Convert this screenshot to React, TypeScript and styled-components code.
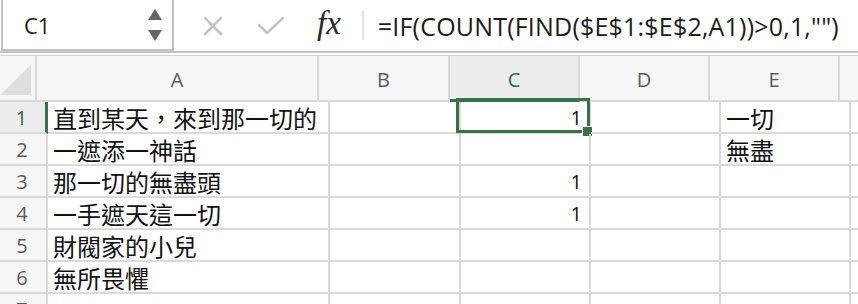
import { FC } from 'react';
import styled, { createGlobalStyle } from 'styled-components';

const GREEN = '#3a7148';
const GRID = '#d9d9d9';

const GlobalStyle = createGlobalStyle`
    html, body {
        margin: 0;
        padding: 0;
        background: #ffffff;
        overflow: hidden;
    }
    body {
        font-family: "Open Sans", "Noto Sans CJK TC", sans-serif;
        color: #1b1b1b;
    }
`;

const columns = ['A', 'B', 'C', 'D', 'E'];
const widths = [282, 131, 130, 130, 130];

type Row = { a: string; c?: string; e?: string };

const rows: Row[] = [
    { a: '直到某天，來到那一切的', c: '1', e: '一切' },
    { a: '一遮添一神話', e: '無盡' },
    { a: '那一切的無盡頭', c: '1' },
    { a: '一手遮天這一切', c: '1' },
    { a: '財閥家的小兒' },
    { a: '無所畏懼' },
    { a: '' },
];

const App: FC = () => {
    return (
        <>
            <GlobalStyle />
            <StyledWindow lang="zh-Hant-TW">
                <StyledFormulaBar>
                    <StyledNameBox>
                        <StyledNameText>C1</StyledNameText>
                        <StyledSpinner>
                            <svg width="14" height="11" viewBox="0 0 14 11">
                                <path d="M7 0 L14 11 L0 11 Z" fill="#666" />
                            </svg>
                            <svg width="14" height="11" viewBox="0 0 14 11">
                                <path d="M0 0 L14 0 L7 11 Z" fill="#666" />
                            </svg>
                        </StyledSpinner>
                    </StyledNameBox>
                    <StyledTools>
                        <StyledToolIcon>
                            <svg width="20" height="20" viewBox="0 0 20 20">
                                <path d="M2 2 L18 18 M18 2 L2 18" stroke="#c4c4c4" strokeWidth="2.6" strokeLinecap="round" />
                            </svg>
                        </StyledToolIcon>
                        <StyledToolIcon>
                            <svg width="28" height="20" viewBox="0 0 28 20">
                                <path d="M2 9 L10 17 L26 2" stroke="#c4c4c4" strokeWidth="2.6" fill="none" strokeLinecap="round" strokeLinejoin="round" />
                            </svg>
                        </StyledToolIcon>
                        <StyledFx>fx</StyledFx>
                        <StyledSeparator />
                    </StyledTools>
                    <StyledFormula>=IF(COUNT(FIND($E$1:$E$2,A1))&gt;0,1,"")</StyledFormula>
                </StyledFormulaBar>
                <StyledDivider />
                <StyledSheet>
                    <StyledHeaderRow>
                        <StyledCorner>
                            <svg width="31" height="30" viewBox="0 0 31 30">
                                <path d="M31 0 L31 30 L0 30 Z" fill="#dedede" />
                            </svg>
                        </StyledCorner>
                        {columns.map((col, i) => (
                            <StyledColHeader key={col} width={widths[i]} active={col === 'C'}>
                                {col}
                            </StyledColHeader>
                        ))}
                        <StyledColHeader width={20} active={false} />
                    </StyledHeaderRow>
                    {rows.map((row, r) => (
                        <StyledRow key={r}>
                            <StyledRowHeader active={r === 0}>{r + 1}</StyledRowHeader>
                            <StyledCell width={widths[0]}>{row.a}</StyledCell>
                            <StyledCell width={widths[1]} />
                            <StyledCell width={widths[2]} numeric>
                                {row.c}
                                {r === 0 && (
                                    <>
                                        <StyledSelection />
                                        <StyledHandle />
                                    </>
                                )}
                            </StyledCell>
                            <StyledCell width={widths[3]} />
                            <StyledCell width={widths[4]}>{row.e}</StyledCell>
                            <StyledCell width={20} />
                        </StyledRow>
                    ))}
                </StyledSheet>
            </StyledWindow>
        </>
    );
};

const StyledWindow = styled.div`
    width: 858px;
    height: 304px;
    overflow: hidden;
    background: #ffffff;
`;

const StyledFormulaBar = styled.div`
    display: flex;
    align-items: center;
    height: 51px;
`;

const StyledNameBox = styled.div`
    box-sizing: border-box;
    display: flex;
    align-items: center;
    justify-content: space-between;
    width: 173px;
    height: 51px;
    margin-left: 1px;
    padding: 0 10px 0 21px;
    border: 2px solid #c2c2c2;
    border-top: none;
    background: #ffffff;
`;

const StyledNameText = styled.span`
    font-size: 22px;
    color: #1b1b1b;
`;

const StyledSpinner = styled.div`
    display: flex;
    flex-direction: column;
    gap: 10px;
`;

const StyledTools = styled.div`
    display: flex;
    align-items: center;
    height: 100%;
    padding-left: 29px;
`;

const StyledToolIcon = styled.div`
    display: flex;
    align-items: center;
    margin-right: 34px;
`;

const StyledFx = styled.span`
    font-family: "Liberation Serif", "DejaVu Serif", serif;
    font-style: italic;
    font-size: 33px;
    color: #2b2b2b;
    margin-left: -2px;
    margin-top: -5px;
`;

const StyledSeparator = styled.div`
    width: 2px;
    height: 29px;
    margin-left: 21px;
    background: #e2e2e2;
`;

const StyledFormula = styled.div`
    font-size: 25px;
    letter-spacing: 0.2px;
    color: #1b1b1b;
    padding-left: 14px;
    white-space: nowrap;
`;

const StyledDivider = styled.div`
    height: 2px;
    border-top: 2px solid #c4c4c4;
    border-bottom: 1px solid #d4d4d4;
`;

const StyledSheet = styled.div`
    display: flex;
    flex-direction: column;
`;

const StyledHeaderRow = styled.div`
    display: flex;
    height: 46px;
    background: #f6f6f6;
`;

const StyledCorner = styled.div`
    box-sizing: border-box;
    display: flex;
    align-items: flex-end;
    justify-content: flex-end;
    width: 48px;
    padding: 0 4px 5px 0;
    border-right: 2px solid ${GRID};
    border-bottom: 2px solid ${GRID};
`;

const StyledColHeader = styled.div<{ width: number; active: boolean }>`
    box-sizing: border-box;
    display: flex;
    align-items: center;
    justify-content: center;
    flex: 0 0 ${(p) => p.width}px;
    padding-top: 3px;
    font-size: 20px;
    color: ${(p) => (p.active ? '#2f6b3e' : '#5a5a5a')};
    background: ${(p) => (p.active ? '#ededed' : 'transparent')};
    border-right: 2px solid ${GRID};
    border-bottom: ${(p) => (p.active ? `3px solid ${GREEN}` : `2px solid ${GRID}`)};
`;

const StyledRow = styled.div`
    display: flex;
    height: 32px;
`;

const StyledRowHeader = styled.div<{ active: boolean }>`
    box-sizing: border-box;
    display: flex;
    align-items: center;
    justify-content: center;
    flex: 0 0 48px;
    padding-right: 2px;
    font-size: 20px;
    color: ${(p) => (p.active ? '#2f6b3e' : '#5a5a5a')};
    background: ${(p) => (p.active ? '#ededed' : '#f6f6f6')};
    border-right: ${(p) => (p.active ? `3px solid ${GREEN}` : `2px solid ${GRID}`)};
    border-bottom: 2px solid ${GRID};
`;

const StyledCell = styled.div<{ width: number; numeric?: boolean }>`
    box-sizing: border-box;
    position: relative;
    display: flex;
    align-items: center;
    justify-content: ${(p) => (p.numeric ? 'flex-end' : 'flex-start')};
    flex: 0 0 ${(p) => p.width}px;
    padding: 0 7px 0 5px;
    font-family: ${(p) => (p.numeric ? '"Open Sans", sans-serif' : '"Noto Sans CJK TC", sans-serif')};
    font-size: ${(p) => (p.numeric ? '20px' : '24px')};
    color: #111111;
    white-space: nowrap;
    border-right: 2px solid ${GRID};
    border-bottom: 2px solid ${GRID};
`;

const StyledSelection = styled.div`
    position: absolute;
    top: -4px;
    left: -5px;
    right: -1px;
    bottom: -1px;
    border: 3px solid ${GREEN};
    pointer-events: none;
`;

const StyledHandle = styled.div`
    position: absolute;
    right: -4px;
    bottom: -5px;
    width: 9px;
    height: 9px;
    background: ${GREEN};
    border: 1px solid #ffffff;
`;

export default App;
